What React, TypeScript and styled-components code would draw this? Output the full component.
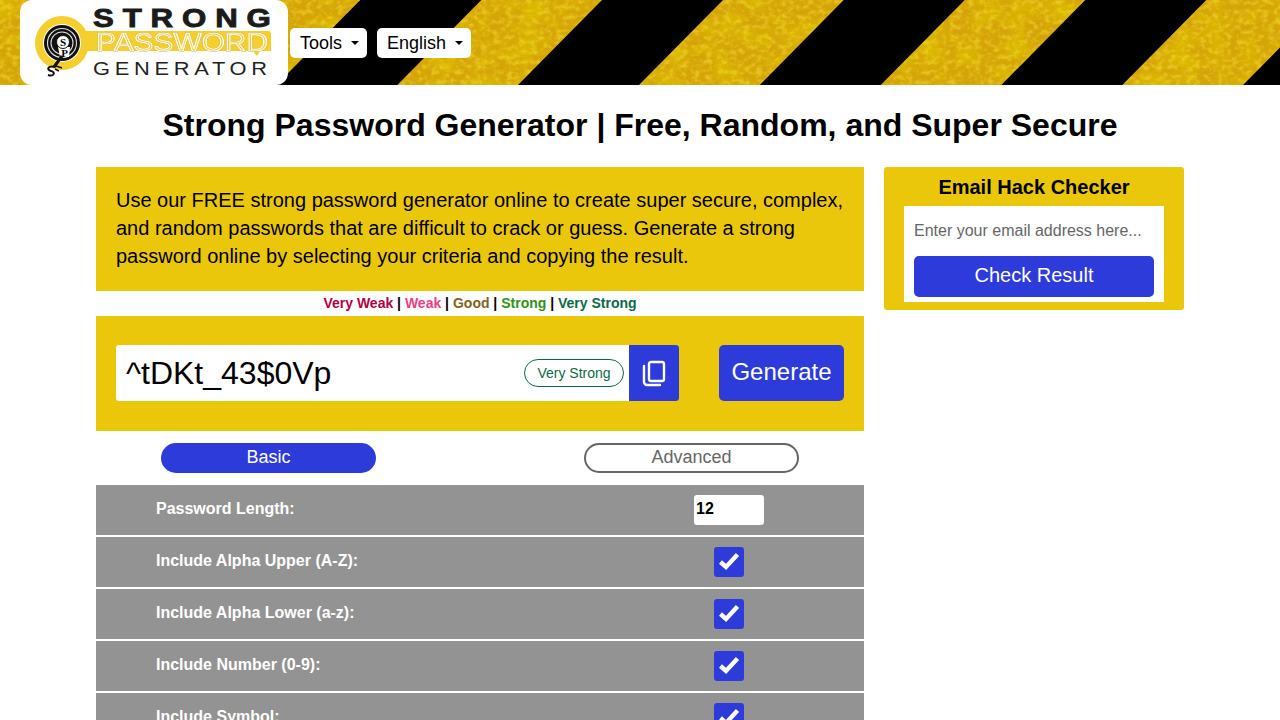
import React from "react"
import styled, { createGlobalStyle } from "styled-components"

const BLUE = "#2e3bdb"
const YELLOW = "#eac70b"

const GlobalStyle = createGlobalStyle`
  html, body {
    margin: 0;
    padding: 0;
    background: #fff;
    font-family: "Liberation Sans", Arial, sans-serif;
    color: #000;
  }
  #root {
    height: 720px;
    overflow: hidden;
  }
  * {
    box-sizing: border-box;
  }
`

const Header = styled.header`
  position: relative;
  height: 85px;
  display: flex;
  align-items: center;
  gap: 10px;
  padding-left: 20px;
  overflow: hidden;
  background: #d9a80a;
`

const BannerArt = styled.svg`
  position: absolute;
  inset: 0;
`

const LogoBox = styled.a`
  position: relative;
  width: 268px;
  height: 85px;
  margin-right: -8px;
  background: #fff;
  border-radius: 12px;
  flex: none;
  display: block;
`

const Menu = styled.button`
  position: relative;
  height: 30px;
  border: 0;
  border-radius: 5px;
  background: #fff;
  color: #000;
  font-family: inherit;
  font-size: 18px;
  padding: 1px 8px 0 10px;
  display: flex;
  align-items: center;
  gap: 9px;
  &:after {
    content: "";
    border-top: 4px solid #000;
    border-left: 4px solid transparent;
    border-right: 4px solid transparent;
  }
`

const Title = styled.h1`
  margin: 0;
  padding-top: 20px;
  height: 82px;
  font-size: 32px;
  line-height: 40px;
  font-weight: 700;
  text-align: center;
`

const Columns = styled.div`
  width: 1088px;
  margin: 0 auto;
  display: flex;
  align-items: flex-start;
  gap: 20px;
`

const Main = styled.main`
  width: 768px;
  flex: none;
`

const Intro = styled.p`
  margin: 0;
  height: 124px;
  padding: 19px 20px;
  background: ${YELLOW};
  font-size: 20px;
  line-height: 28px;
`

const Legend = styled.div`
  height: 25px;
  line-height: 25px;
  text-align: center;
  font-size: 14px;
  font-weight: 700;
`

const Strength = styled.span<{ $color: string }>`
  color: ${(p) => p.$color};
`

const GeneratorPanel = styled.section`
  height: 115px;
  padding: 29px 20px 0;
  background: ${YELLOW};
  display: flex;
  align-items: flex-start;
  gap: 40px;
`

const PasswordGroup = styled.div`
  width: 563px;
  height: 56px;
  display: flex;
  align-items: center;
  background: #fff;
  border-radius: 3px;
`

const PasswordInput = styled.input`
  flex: 1;
  min-width: 0;
  height: 100%;
  border: 0;
  outline: 0;
  background: transparent;
  padding: 0 10px;
  font-family: inherit;
  font-size: 32px;
  color: #000;
`

const Badge = styled.span`
  width: 100px;
  height: 28px;
  margin-right: 5px;
  border: 1px solid #0b6a45;
  border-radius: 14px;
  color: #0b6a45;
  font-size: 14px;
  line-height: 26px;
  text-align: center;
  flex: none;
`

const CopyButton = styled.button`
  width: 50px;
  height: 56px;
  border: 0;
  padding: 0;
  border-radius: 0 3px 3px 0;
  background: ${BLUE};
  display: flex;
  align-items: center;
  justify-content: center;
  flex: none;
`

const GenerateButton = styled.button`
  width: 125px;
  height: 56px;
  border: 0;
  border-radius: 5px;
  background: ${BLUE};
  color: #fff;
  font-family: inherit;
  font-size: 24px;
  padding: 0 0 3px;
`

const Tabs = styled.div`
  height: 54px;
  padding: 12px 65px 0;
  display: flex;
  justify-content: space-between;
`

const Tab = styled.button<{ $active?: boolean }>`
  width: 215px;
  height: 30px;
  border-radius: 15px;
  border: 2px solid ${(p) => (p.$active ? BLUE : "#666")};
  background: ${(p) => (p.$active ? BLUE : "#fff")};
  color: ${(p) => (p.$active ? "#fff" : "#666")};
  font-family: inherit;
  font-size: 18px;
  line-height: 24px;
  padding: 0 0 3px;
`

const Options = styled.div`
  display: flex;
  flex-direction: column;
  gap: 2px;
`

const OptionRow = styled.div`
  height: 50px;
  padding-left: 60px;
  background: #939393;
  display: grid;
  grid-template-columns: 538px 70px;
  align-items: center;
  justify-items: center;
`

const OptionLabel = styled.label`
  justify-self: start;
  padding-bottom: 2px;
  color: #fff;
  font-size: 16px;
  font-weight: 700;
`

const LengthInput = styled.input`
  width: 70px;
  height: 30px;
  border: 0;
  border-radius: 3px;
  outline: 0;
  padding: 0 2px 2px;
  background: #fff;
  font-family: inherit;
  font-size: 16px;
  font-weight: 700;
  color: #000;
`

const CheckBox = styled.span`
  width: 30px;
  height: 30px;
  border-radius: 3px;
  background: ${BLUE};
  display: flex;
  align-items: center;
  justify-content: center;
`

const Sidebar = styled.aside`
  width: 300px;
  height: 143px;
  flex: none;
  padding: 0 20px;
  border-radius: 3px;
  background: ${YELLOW};
`

const SideTitle = styled.h2`
  margin: 0;
  height: 39px;
  padding-top: 9px;
  font-size: 20px;
  line-height: 23px;
  font-weight: 700;
  text-align: center;
`

const SideForm = styled.div`
  height: 96px;
  padding: 0 10px;
  background: #fff;
  display: flex;
  flex-direction: column;
`

const EmailInput = styled.input`
  height: 50px;
  border: 0;
  outline: 0;
  padding: 0;
  font-family: inherit;
  font-size: 16px;
  color: #000;
  &::placeholder {
    color: #666;
    opacity: 1;
  }
`

const CheckResult = styled.button`
  height: 41px;
  border: 0;
  border-radius: 5px;
  background: ${BLUE};
  color: #fff;
  font-family: inherit;
  font-size: 20px;
  padding: 0 0 2px;
`

// hazard stripes at 45deg over a mottled gold texture
const Banner = () => {
  const stripes = [-207, 34.7, 276.3, 518, 759.7, 1001.3, 1243]
  return (
    <BannerArt width="1280" height="85" viewBox="0 0 1280 85" aria-hidden="true">
      <defs>
        <filter id="patches" x="0" y="0" width="100%" height="100%">
          <feTurbulence type="fractalNoise" baseFrequency="0.035 0.045" numOctaves="3" seed="4" />
          <feColorMatrix
            type="matrix"
            values="0 0 0 0 0.72  0 0 0 0 0.5  0 0 0 0 0  3 0 0 0 -1.2"
          />
        </filter>
        <filter id="grain" x="0" y="0" width="100%" height="100%">
          <feTurbulence type="fractalNoise" baseFrequency="0.16 0.2" numOctaves="2" seed="11" />
          <feColorMatrix
            type="matrix"
            values="0 0 0 0 0.9  0 0 0 0 0.7  0 0 0 0 0.03  3 0 0 0 -1.3"
          />
          <feGaussianBlur stdDeviation="0.5" />
        </filter>
      </defs>
      <rect width="1280" height="85" fill="#d5a408" />
      <rect width="1280" height="85" filter="url(#patches)" opacity="0.8" />
      <rect width="1280" height="85" filter="url(#grain)" opacity="0.55" />
      {stripes.map((x) => (
        <polygon
          key={x}
          points={`${x},85 ${x + 121},85 ${x + 205},0 ${x + 84},0`}
          fill="#000"
        />
      ))}
    </BannerArt>
  )
}

const Logo = () => (
  <svg width="268" height="85" viewBox="0 0 268 85" aria-label="Strong Password Generator">
    <path d="M60 31H248Q251 31 251 34V51L240 51 237 56 233 51H60Z" fill="#f5cf2e" />
    <circle cx="42" cy="43" r="27" fill="#f5cf2e" />
    <circle cx="42" cy="43" r="19" fill="#fff" />
    <circle cx="42" cy="43" r="18" fill="#111" />
    <circle cx="42" cy="43" r="14.5" fill="none" stroke="#ddd" strokeWidth="1.1" />
    <circle cx="42" cy="43" r="11" fill="none" stroke="#ddd" strokeWidth="1.1" />
    <path d="M38 47H50L49 57H40Z" fill="#fff" />
    <circle cx="43" cy="42" r="6.5" fill="#fff" stroke="#111" strokeWidth="1" />
    <text x="43" y="46" textAnchor="middle" fontFamily="Liberation Serif" fontSize="11" fontWeight="700">S</text>
    <text x="44.5" y="57" textAnchor="middle" fontFamily="Liberation Serif" fontSize="11" fontWeight="700">P</text>
    <path d="M42 56L34 67" stroke="#111" strokeWidth="3" />
    <path d="M36 66L42 68M35 69L39 71" stroke="#111" strokeWidth="1.6" fill="none" />
    <path d="M35 67C28 65 26 70 31 71C36 72 34 77 28 75" stroke="#111" strokeWidth="2" fill="none" />
    <g transform="translate(73 27) scale(1.2 1)">
      <text
        fontFamily="Liberation Sans"
        fontSize="26"
        fontWeight="700"
        letterSpacing="7.4"
        fill="#1b1b1b"
        stroke="#1b1b1b"
        strokeWidth="0.9"
      >
        STRONG
      </text>
    </g>
    <text
      x="76"
      y="51"
      textLength="172"
      lengthAdjust="spacingAndGlyphs"
      fontFamily="Liberation Sans"
      fontSize="25"
      fill="#f3cd2c"
      stroke="#fffbe6"
      strokeWidth="1.2"
      style={{ filter: "drop-shadow(0.5px 0.5px 0 #7d6410)" }}
    >
      PASSWORD
    </text>
    <g transform="translate(73 75) scale(1.15 1)">
      <text fontFamily="Liberation Sans" fontSize="19" letterSpacing="4.1" fill="#222">
        GENERATOR
      </text>
    </g>
  </svg>
)

const CopyIcon = () => (
  <svg width="24" height="28" viewBox="0 0 24 28" fill="none" stroke="#fff" strokeWidth="2.4" aria-hidden="true">
    <rect x="7" y="3" width="15" height="19" rx="2" />
    <path d="M2 7V23a3 3 0 0 0 3 3H18" strokeLinecap="round" />
  </svg>
)

const CheckIcon = () => (
  <svg width="22" height="22" viewBox="0 0 22 22" fill="none" stroke="#fff" strokeWidth="4.4" aria-hidden="true">
    <path d="M2.5 11L8 16L19.5 3.5" />
  </svg>
)

const checks = [
  "Include Alpha Upper (A-Z):",
  "Include Alpha Lower (a-z):",
  "Include Number (0-9):",
  "Include Symbol:",
]

export default function App() {
  return (
    <>
      <GlobalStyle />
      <Header>
        <Banner />
        <LogoBox>
          <Logo />
        </LogoBox>
        <Menu>Tools</Menu>
        <Menu>English</Menu>
      </Header>
      <Title>Strong Password Generator | Free, Random, and Super Secure</Title>
      <Columns>
        <Main>
          <Intro>
            Use our FREE strong password generator online to create super secure, complex, and
            random passwords that are difficult to crack or guess. Generate a strong password
            online by selecting your criteria and copying the result.
          </Intro>
          <Legend>
            <Strength $color="#b5003f">Very Weak</Strength> | <Strength $color="#ec3f82">Weak</Strength> |{" "}
            <Strength $color="#85621b">Good</Strength> | <Strength $color="#2f9413">Strong</Strength> |{" "}
            <Strength $color="#0b6a45">Very Strong</Strength>
          </Legend>
          <GeneratorPanel>
            <PasswordGroup>
              <PasswordInput defaultValue="^tDKt_43$0Vp" />
              <Badge>Very Strong</Badge>
              <CopyButton aria-label="Copy">
                <CopyIcon />
              </CopyButton>
            </PasswordGroup>
            <GenerateButton>Generate</GenerateButton>
          </GeneratorPanel>
          <Tabs>
            <Tab $active>Basic</Tab>
            <Tab>Advanced</Tab>
          </Tabs>
          <Options>
            <OptionRow>
              <OptionLabel>Password Length:</OptionLabel>
              <LengthInput defaultValue="12" />
            </OptionRow>
            {checks.map((label) => (
              <OptionRow key={label}>
                <OptionLabel>{label}</OptionLabel>
                <CheckBox>
                  <CheckIcon />
                </CheckBox>
              </OptionRow>
            ))}
          </Options>
        </Main>
        <Sidebar>
          <SideTitle>Email Hack Checker</SideTitle>
          <SideForm>
            <EmailInput placeholder="Enter your email address here..." />
            <CheckResult>Check Result</CheckResult>
          </SideForm>
        </Sidebar>
      </Columns>
    </>
  )
}
